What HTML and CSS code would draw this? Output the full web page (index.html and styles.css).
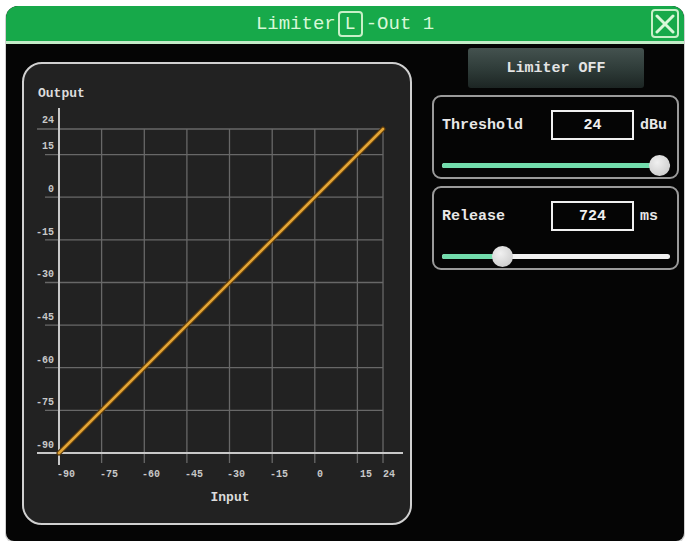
FILE: index.html
```html
<!DOCTYPE html>
<html>
<head>
<meta charset="utf-8">
<title>Limiter - Out 1</title>
	<link rel="stylesheet" href="styles.css">
</head>
<body>
	<div class="window">
		<header class="titlebar">
			<span></span>
			<h1 class="title">Limiter<span class="chan">L</span>-Out 1</h1>
			<button class="close">
				<svg width="20" height="20" viewBox="0 0 20 20"><path d="M2 2 L18 18 M18 2 L2 18" stroke="#d8f8d8" stroke-width="3" stroke-linecap="round"/></svg>
			</button>
		</header>

		<main class="content">
			<section class="graph">
				<svg width="386" height="459" viewBox="0 0 386 459">
					<g class="grid">
						<line x1="13" y1="65" x2="359" y2="65"/>
						<line x1="21" y1="90.6" x2="359" y2="90.6"/>
						<line x1="21" y1="133.2" x2="359" y2="133.2"/>
						<line x1="21" y1="175.8" x2="359" y2="175.8"/>
						<line x1="21" y1="218.5" x2="359" y2="218.5"/>
						<line x1="21" y1="261.1" x2="359" y2="261.1"/>
						<line x1="21" y1="303.7" x2="359" y2="303.7"/>
						<line x1="21" y1="346.4" x2="359" y2="346.4"/>

						<line x1="77.6" y1="65" x2="77.6" y2="399"/>
						<line x1="120.3" y1="65" x2="120.3" y2="399"/>
						<line x1="162.9" y1="65" x2="162.9" y2="399"/>
						<line x1="205.5" y1="65" x2="205.5" y2="399"/>
						<line x1="248.2" y1="65" x2="248.2" y2="399"/>
						<line x1="290.8" y1="65" x2="290.8" y2="399"/>
						<line x1="333.4" y1="65" x2="333.4" y2="399"/>
						<line x1="359" y1="65" x2="359" y2="399"/>
					</g>
					<g class="axis">
						<line x1="35" y1="44" x2="35" y2="401"/>
						<line x1="13" y1="389" x2="379" y2="389"/>
					</g>

					<line class="curve-edge" x1="35" y1="389" x2="359" y2="65"/>
					<line class="curve" x1="35" y1="389" x2="359" y2="65"/>

					<g class="ticks-y">
						<text x="30" y="59">24</text>
						<text x="30" y="85">15</text>
						<text x="30" y="128">0</text>
						<text x="30" y="171">-15</text>
						<text x="30" y="213">-30</text>
						<text x="30" y="256">-45</text>
						<text x="30" y="299">-60</text>
						<text x="30" y="341">-75</text>
						<text x="30" y="384">-90</text>
					</g>
					<g class="ticks-x">
						<text x="33" y="413">-90</text>
						<text x="76" y="413">-75</text>
						<text x="118" y="413">-60</text>
						<text x="161" y="413">-45</text>
						<text x="203" y="413">-30</text>
						<text x="246" y="413">-15</text>
						<text x="293" y="413">0</text>
						<text x="336" y="413">15</text>
						<text x="359" y="413">24</text>
					</g>
					<text class="axis-name" x="14" y="33">Output</text>
					<text class="axis-name middle" x="206" y="437">Input</text>
				</svg>
			</section>

			<aside class="controls">
				<button class="toggle">Limiter OFF</button>

				<div class="param">
					<div class="param-row">
						<span class="param-name">Threshold</span>
						<span class="param-value">24</span>
						<span class="param-unit">dBu</span>
					</div>
					<div class="slider">
						<div class="slider-fill" style="width: 217px;"></div>
						<div class="slider-thumb" style="left: 207px;"></div>
					</div>
				</div>

				<div class="param">
					<div class="param-row">
						<span class="param-name">Release</span>
						<span class="param-value">724</span>
						<span class="param-unit">ms</span>
					</div>
					<div class="slider">
						<div class="slider-fill" style="width: 60px;"></div>
						<div class="slider-thumb" style="left: 50px;"></div>
					</div>
				</div>
			</aside>
		</main>
	</div>
</body>
</html>
```

FILE: styles.css
```css
body {
	margin: 0;
	padding: 6px 0 0 6px;
	background: white;
	font-family: "Liberation Mono", "DejaVu Sans Mono", monospace;
}
.window {
	width: 678px;
	height: 535px;
	background: #050505;
	border-radius: 12px 12px 8px 8px;
	overflow: hidden;
	box-shadow: 0 1px 0 1px #d0d0d0;
}
.titlebar {
	height: 35px;
	background: #17a94a;
	border-bottom: 3px solid #c4ecc8;
	display: grid;
	grid-template-columns: 1fr auto 1fr;
	align-items: center;
}
.title {
	margin: 0;
	font-size: 19px;
	font-weight: normal;
	color: #d8f8d8;
	display: flex;
	align-items: center;
}
.chan {
	display: inline-flex;
	align-items: center;
	justify-content: center;
	width: 21px;
	height: 22px;
	border: 2px solid #c8f0c8;
	border-radius: 4px;
	margin: 0 3px 0 2px;
	font-size: 18px;
}
.close {
	justify-self: end;
	margin-right: 5px;
	width: 28px;
	height: 29px;
	padding: 0;
	border: 2px solid #c8f0c8;
	border-radius: 4px;
	background: transparent;
	display: flex;
	align-items: center;
	justify-content: center;
}
.content {
	display: flex;
	align-items: flex-start;
	gap: 20px;
	padding: 4px 0 0 16px;
}
.graph {
	margin-top: 14px;
	width: 386px;
	height: 459px;
	background: #222;
	border: 2px solid #d0d0d0;
	border-radius: 20px;
}
.graph svg {
	display: block;
}
.grid line {
	stroke: #686868;
	stroke-width: 1.3;
}
.axis line {
	stroke: #c8c8c8;
	stroke-width: 2;
}
.curve-edge {
	stroke: #5a3a0a;
	stroke-width: 5;
	stroke-linecap: round;
}
.curve {
	stroke: #e2a436;
	stroke-width: 2.6;
	stroke-linecap: round;
}
.ticks-y text, .ticks-x text {
	font-family: "Liberation Mono", monospace;
	font-size: 10px;
	font-weight: bold;
	fill: #c8c8c8;
}
.ticks-y text {
	text-anchor: end;
}
.axis-name {
	font-family: "Liberation Mono", monospace;
	font-size: 13px;
	font-weight: bold;
	fill: #dcdcdc;
}
.axis-name.middle {
	text-anchor: middle;
}
.controls {
	width: 247px;
	display: flex;
	flex-direction: column;
	gap: 7px;
}
.toggle {
	align-self: flex-start;
	margin-left: 36px;
	width: 176px;
	height: 40px;
	border: none;
	border-radius: 3px;
	background: linear-gradient(#44524f, #2e3b38 55%, #1c2523);
	color: #e4e4e4;
	font-family: "Liberation Mono", monospace;
	font-size: 15px;
	font-weight: bold;
}
.param {
	border: 2px solid #9a9a9a;
	border-radius: 9px;
	padding: 13px 7px 0 8px;
	height: 67px;
}
.param-row {
	display: flex;
	align-items: center;
	height: 30px;
}
.param-name {
	width: 109px;
	color: #e8e8e8;
	font-size: 15px;
	font-weight: bold;
}
.param-value {
	width: 79px;
	height: 26px;
	border: 2px solid #f0f0f0;
	display: flex;
	align-items: center;
	justify-content: center;
	color: #f0f0f0;
	font-size: 15px;
	font-weight: bold;
}
.param-unit {
	margin-left: 6px;
	color: #e8e8e8;
	font-size: 15px;
	font-weight: bold;
}
.slider {
	position: relative;
	margin-top: 23px;
	height: 5px;
	border-radius: 3px;
	background: #f2f2f2;
}
.slider-fill {
	height: 100%;
	border-radius: 3px;
	background: #72dcac;
}
.slider-thumb {
	position: absolute;
	top: -8px;
	width: 21px;
	height: 21px;
	border-radius: 50%;
	background: radial-gradient(circle at 40% 35%, #f0f0f0, #c4c4c4);
}
```
